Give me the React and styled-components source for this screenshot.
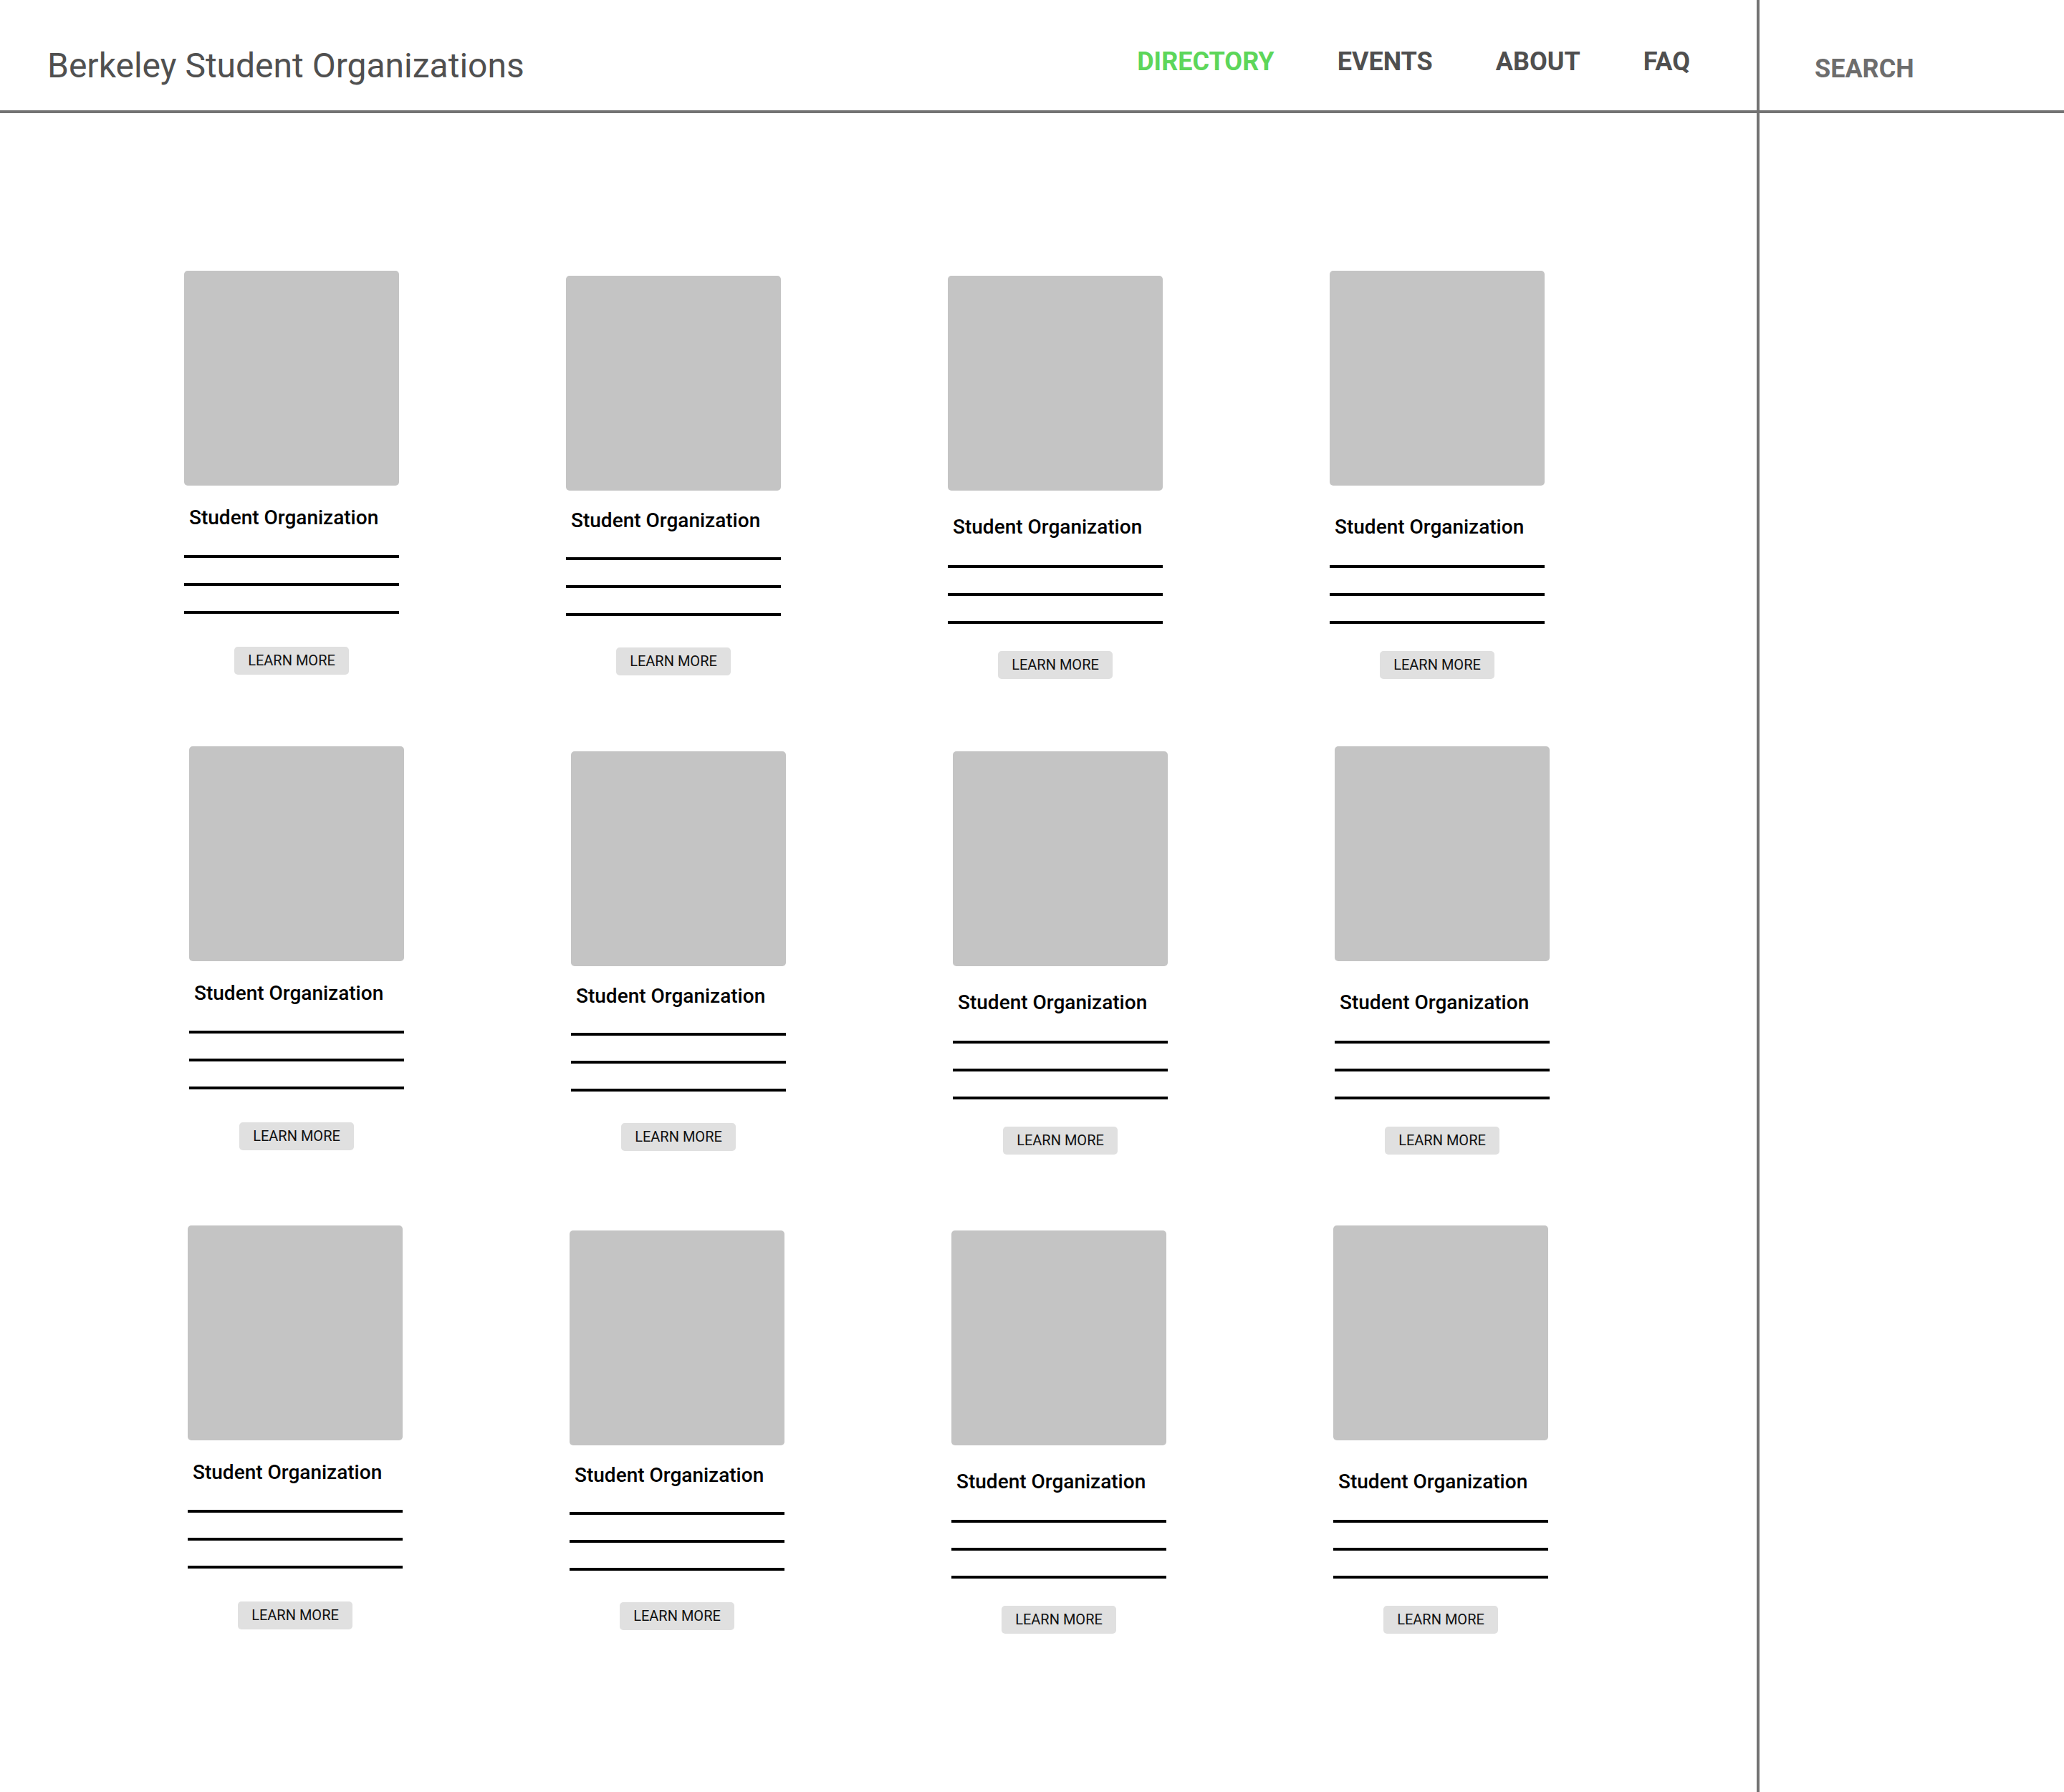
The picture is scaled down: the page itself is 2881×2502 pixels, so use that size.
import styled, { createGlobalStyle } from "styled-components";

const GlobalStyle = createGlobalStyle`
  html, body {
    margin: 0;
    padding: 0;
    background: #ffffff;
  }
  body {
    font-family: Roboto, "Liberation Sans", Arial, sans-serif;
  }
  * {
    box-sizing: border-box;
  }
`;

const NAV_LINKS = [
  { label: "DIRECTORY", active: true },
  { label: "EVENTS" },
  { label: "ABOUT" },
  { label: "FAQ" },
];

// the mockup is hand placed, so each column sits a little differently
const COLUMNS = [
  { imgOffset: 0, titleGap: 31, linesGap: 38, buttonGap: 46 },
  { imgOffset: 7, titleGap: 28, linesGap: 37, buttonGap: 44 },
  { imgOffset: 7, titleGap: 37, linesGap: 39, buttonGap: 38 },
  { imgOffset: 0, titleGap: 44, linesGap: 39, buttonGap: 38 },
];

const ROWS = [
  { shiftX: 257, spaceAbove: 0 },
  { shiftX: 264, spaceAbove: 94 },
  { shiftX: 262, spaceAbove: 99 },
];

const OrgCard = ({ column }) => (
  <Card>
    <Thumb $offset={column.imgOffset} />
    <OrgName $gap={column.titleGap}>Student Organization</OrgName>
    <Lines $gap={column.linesGap}>
      <Rule />
      <Rule />
      <Rule />
    </Lines>
    <LearnMore $gap={column.buttonGap}>LEARN MORE</LearnMore>
  </Card>
);

const App = () => {
  return (
    <>
      <GlobalStyle />
      <Page>
        <Main>
          <Header>
            <SiteTitle>Berkeley Student Organizations</SiteTitle>
            <Nav>
              {NAV_LINKS.map((link) => (
                <NavItem key={link.label} $active={link.active}>
                  {link.label}
                </NavItem>
              ))}
            </Nav>
          </Header>
          <Directory>
            {ROWS.map((row, i) => (
              <CardRow key={i} $shiftX={row.shiftX} $spaceAbove={row.spaceAbove}>
                {COLUMNS.map((column, j) => (
                  <OrgCard key={j} column={column} />
                ))}
              </CardRow>
            ))}
          </Directory>
        </Main>
        <Sidebar>
          <SearchBar>
            <SearchLabel>SEARCH</SearchLabel>
          </SearchBar>
        </Sidebar>
      </Page>
    </>
  );
};

const Page = styled.div`
  display: flex;
  min-height: 100vh;
  background: #ffffff;
`;

const Main = styled.main`
  flex: 0 0 2456px;
  border-right: 4px solid #737373;
  display: flex;
  flex-direction: column;
`;

const Header = styled.header`
  height: 158px;
  display: flex;
  align-items: flex-start;
  padding: 68px 93px 0 66px;
  border-bottom: 4px solid #737373;
`;

const SiteTitle = styled.h1`
  margin: 0;
  font-family: Roboto, "Liberation Sans", sans-serif;
  font-weight: 400;
  font-size: 48px;
  line-height: 48px;
  color: #505050;
  white-space: nowrap;
`;

const Nav = styled.nav`
  margin-left: auto;
  display: flex;
  gap: 88px;
`;

const NavItem = styled.a`
  font-family: Roboto, "Liberation Sans", sans-serif;
  font-weight: 700;
  font-size: 36px;
  line-height: 36px;
  color: ${(props) => (props.$active ? "#5dd65a" : "#4f4f4f")};
  text-decoration: none;
  cursor: pointer;
`;

const Sidebar = styled.aside`
  flex: 1;
  display: flex;
  flex-direction: column;
`;

const SearchBar = styled.div`
  height: 158px;
  padding: 78px 0 0 77px;
  border-bottom: 4px solid #737373;
`;

const SearchLabel = styled.span`
  display: block;
  font-family: Roboto, "Liberation Sans", sans-serif;
  font-weight: 700;
  font-size: 36px;
  line-height: 36px;
  color: #6d6d6d;
`;

const Directory = styled.section`
  padding-top: 220px;
  display: flex;
  flex-direction: column;
`;

const CardRow = styled.div`
  display: flex;
  align-items: flex-start;
  gap: 233px;
  padding-left: ${(props) => props.$shiftX}px;
  margin-top: ${(props) => props.$spaceAbove}px;
`;

const Card = styled.article`
  width: 300px;
  display: flex;
  flex-direction: column;
`;

const Thumb = styled.div`
  width: 300px;
  height: 300px;
  margin-top: ${(props) => props.$offset}px;
  background: #c4c4c4;
  border-radius: 5px;
`;

const OrgName = styled.h3`
  margin: ${(props) => props.$gap}px 0 0 0;
  padding-left: 7px;
  font-family: Roboto, "Liberation Sans", sans-serif;
  font-weight: 500;
  font-size: 28px;
  line-height: 28px;
  color: #000000;
  white-space: nowrap;
`;

const Lines = styled.div`
  margin-top: ${(props) => props.$gap}px;
  display: flex;
  flex-direction: column;
  gap: 35px;
`;

const Rule = styled.div`
  height: 4px;
  background: #000000;
`;

const LearnMore = styled.button`
  align-self: center;
  margin-top: ${(props) => props.$gap}px;
  width: 160px;
  height: 39px;
  padding: 0;
  border: none;
  border-radius: 5px;
  background: #e0e0e0;
  font-family: Roboto, "Liberation Sans", sans-serif;
  font-weight: 400;
  font-size: 20px;
  line-height: 39px;
  color: #111111;
  cursor: pointer;
`;

export default App;
